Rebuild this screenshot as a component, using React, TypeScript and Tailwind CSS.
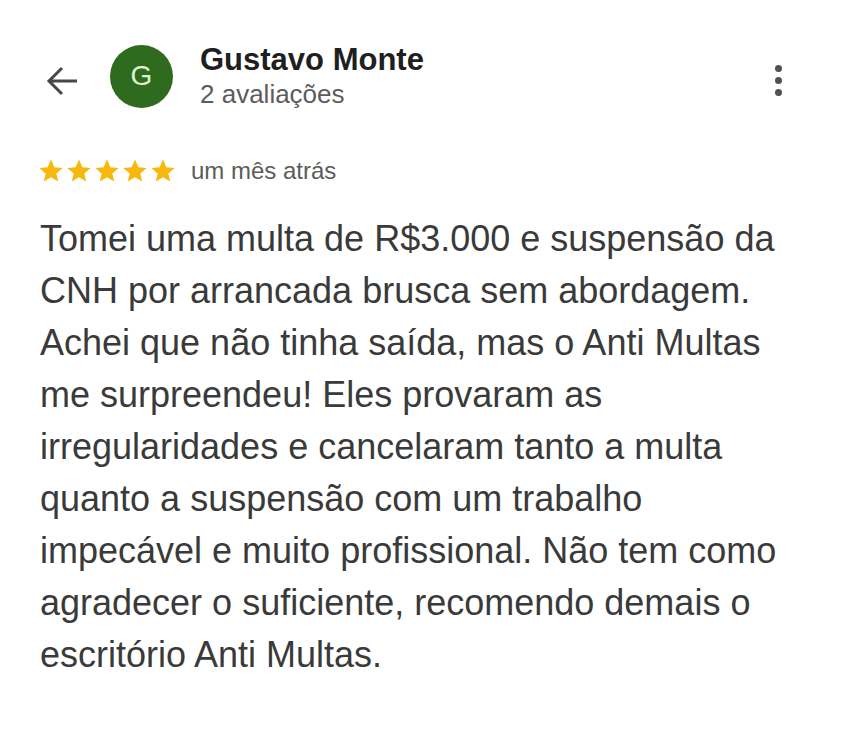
const lines = [
  "Tomei uma multa de R$3.000 e suspensão da",
  "CNH por arrancada brusca sem abordagem.",
  "Achei que não tinha saída, mas o Anti Multas",
  "me surpreendeu! Eles provaram as",
  "irregularidades e cancelaram tanto a multa",
  "quanto a suspensão com um trabalho",
  "impecável e muito profissional. Não tem como",
  "agradecer o suficiente, recomendo demais o",
  "escritório Anti Multas.",
];

function Star() {
  return (
    <svg viewBox="0 0 24 24" className="h-[28px] w-[28px]">
      <path
        fill="#f6b90b"
        d="M12 2.2l2.9 6.6 7.1.6-5.4 4.7 1.6 7-6.2-3.7-6.2 3.7 1.6-7L2 9.4l7.1-.6z"
      />
    </svg>
  );
}

export default function App() {
  return (
    <div className="h-[730px] w-[844px] bg-white font-['Liberation_Sans',Arial,sans-serif]">
      <div className="flex items-center pt-[42px] pl-[46px] pr-[62px]">
        <svg viewBox="0 0 32 32" className="mt-[10px] h-[32px] w-[32px]" fill="none">
          <path
            d="M31 16H4M16 3L3 16l13 13"
            stroke="#474747"
            strokeWidth="3"
          />
        </svg>
        <div className="ml-[32px] flex h-[63px] w-[63px] items-center justify-center rounded-full bg-[#2f6b1e] text-[28px] text-[#dff3cf]">
          G
        </div>
        <div className="ml-[27px] flex-1">
          <p className="text-[31px] font-bold leading-[36px] text-[#1f1f1f]">Gustavo Monte</p>
          <p className="text-[26px] leading-[32px] text-[#5c5c5c]">2 avaliações</p>
        </div>
        <div className="mt-[8px] flex flex-col items-center gap-[5px]">
          <span className="h-[7px] w-[7px] rounded-full bg-[#505050]" />
          <span className="h-[7px] w-[7px] rounded-full bg-[#505050]" />
          <span className="h-[7px] w-[7px] rounded-full bg-[#505050]" />
        </div>
      </div>

      <div className="mt-[43px] flex items-center pl-[37px]">
        <div className="flex">
          <Star />
          <Star />
          <Star />
          <Star />
          <Star />
        </div>
        <span className="ml-[14px] text-[24px] text-[#5c5c5c]">um mês atrás</span>
      </div>

      <div className="mt-[24px] pl-[40px] text-[36px] leading-[52px] text-[#3a3a3a]">
        {lines.map((l) => (
          <p key={l}>{l}</p>
        ))}
      </div>
    </div>
  );
}
